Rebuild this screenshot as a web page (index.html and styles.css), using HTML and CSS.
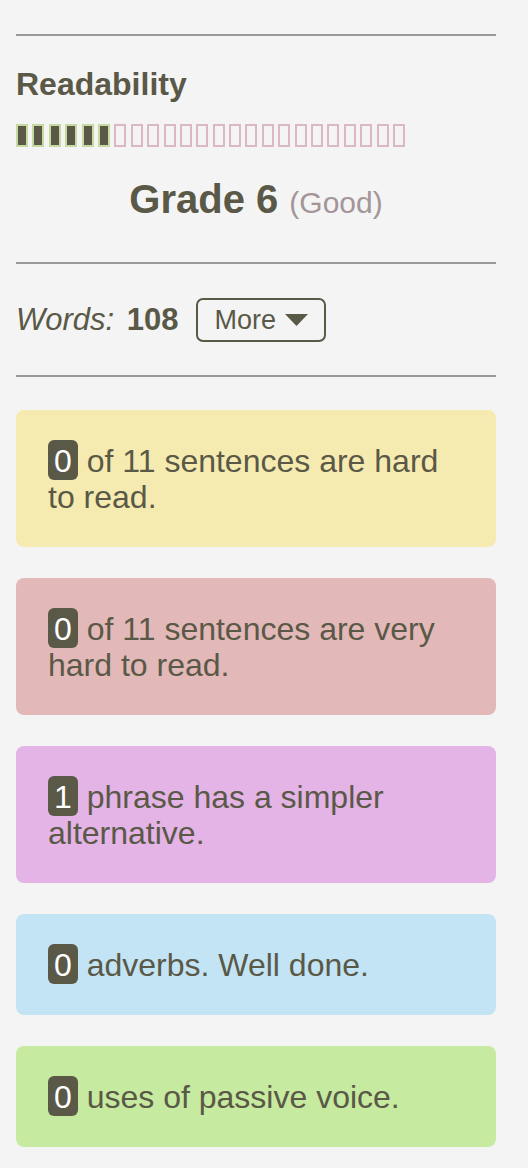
FILE: index.html
```html
<!DOCTYPE html>
<html lang="en">
<head>
<meta charset="utf-8">
<title>Readability</title>
<link rel="stylesheet" href="styles.css">
</head>
<body>
<div class="panel">
  <hr class="rule rule-top">
  <h2 class="title">Readability</h2>
  <div class="meter">
    <span class="cell on"></span><span class="cell on"></span><span class="cell on"></span><span class="cell on"></span><span class="cell on"></span><span class="cell on"></span>
    <span class="cell"></span><span class="cell"></span><span class="cell"></span><span class="cell"></span><span class="cell"></span><span class="cell"></span>
    <span class="cell"></span><span class="cell"></span><span class="cell"></span><span class="cell"></span><span class="cell"></span><span class="cell"></span>
    <span class="cell"></span><span class="cell"></span><span class="cell"></span><span class="cell"></span><span class="cell"></span><span class="cell"></span>
  </div>
  <p class="grade"><strong>Grade 6</strong> <span class="grade-note">(Good)</span></p>
  <hr class="rule rule-mid">
  <div class="words-row">
    <span class="words"><em>Words:</em> <strong>108</strong></span>
    <button class="more" type="button">More <svg class="caret" width="23" height="12" viewBox="0 0 23 12"><polygon points="0,0 23,0 11.5,12" fill="#5a5847"/></svg></button>
  </div>
  <hr class="rule rule-bottom">
  <div class="cards">
    <div class="card card-yellow"><span class="badge">0</span> of 11 sentences are hard to read.</div>
    <div class="card card-red"><span class="badge">0</span> of 11 sentences are very hard to read.</div>
    <div class="card card-purple"><span class="badge">1</span> phrase has a simpler alternative.</div>
    <div class="card card-blue"><span class="badge">0</span> adverbs. Well done.</div>
    <div class="card card-green"><span class="badge">0</span> uses of passive voice.</div>
  </div>
</div>
</body>
</html>
```

FILE: styles.css
```css
html, body {
  margin: 0;
  padding: 0;
  background: #f4f4f4;
}

body {
  font-family: "Liberation Sans", Arial, Helvetica, sans-serif;
  color: #5a5847;
}

.panel {
  width: 480px;
  margin-left: 16px;
}

.rule {
  border: 0;
  height: 2px;
  background: #9a9898;
  margin: 0;
}

.rule-top {
  margin-top: 34px;
}

.title {
  margin: 30px 0 0;
  font-size: 32px;
  line-height: 36px;
  font-weight: bold;
}

.meter {
  margin-top: 22px;
  display: flex;
  gap: 4.4px;
  height: 23px;
}

.cell {
  box-sizing: border-box;
  width: 12px;
  height: 23px;
  border: 2px solid #dcb8c6;
}

.cell.on {
  background: #5a5847;
  border-color: #c6d9a0;
}

.grade {
  margin: 28px 0 0;
  text-align: center;
  font-size: 40px;
  line-height: 48px;
}

.grade strong {
  font-weight: bold;
}

.grade-note {
  font-size: 30px;
  line-height: 30px;
  color: #a39598;
}

.rule-mid {
  margin-top: 39px;
}

.words-row {
  margin-top: 34px;
  display: flex;
  align-items: center;
  gap: 17px;
  height: 44px;
}

.words {
  font-size: 31px;
  line-height: 36px;
}

.words strong {
  font-weight: bold;
  margin-left: 4px;
}

.more {
  box-sizing: border-box;
  height: 44px;
  display: flex;
  align-items: center;
  gap: 9px;
  padding: 0 16px 0 17px;
  border: 2px solid #5a5847;
  border-radius: 7px;
  background: transparent;
  color: #5a5847;
  font-family: "Liberation Sans", Arial, Helvetica, sans-serif;
  font-size: 27px;
  line-height: 30px;
}

.caret {
  display: block;
}

.rule-bottom {
  margin-top: 33px;
}

.cards {
  margin-top: 33px;
  display: flex;
  flex-direction: column;
  gap: 31px;
}

.card {
  padding: 33px 32px 32px;
  border-radius: 8px;
  font-size: 32px;
  line-height: 36px;
}

.card-yellow { background: #f5ebb0; }
.card-red { background: #e3b8b8; }
.card-purple { background: #e3b4e5; }
.card-blue { background: #c3e4f4; }
.card-green { background: #c6ea9f; }

.badge {
  background: #5a5847;
  color: #ffffff;
  padding: 3px 6px 1px;
  border-radius: 6px;
}
```
